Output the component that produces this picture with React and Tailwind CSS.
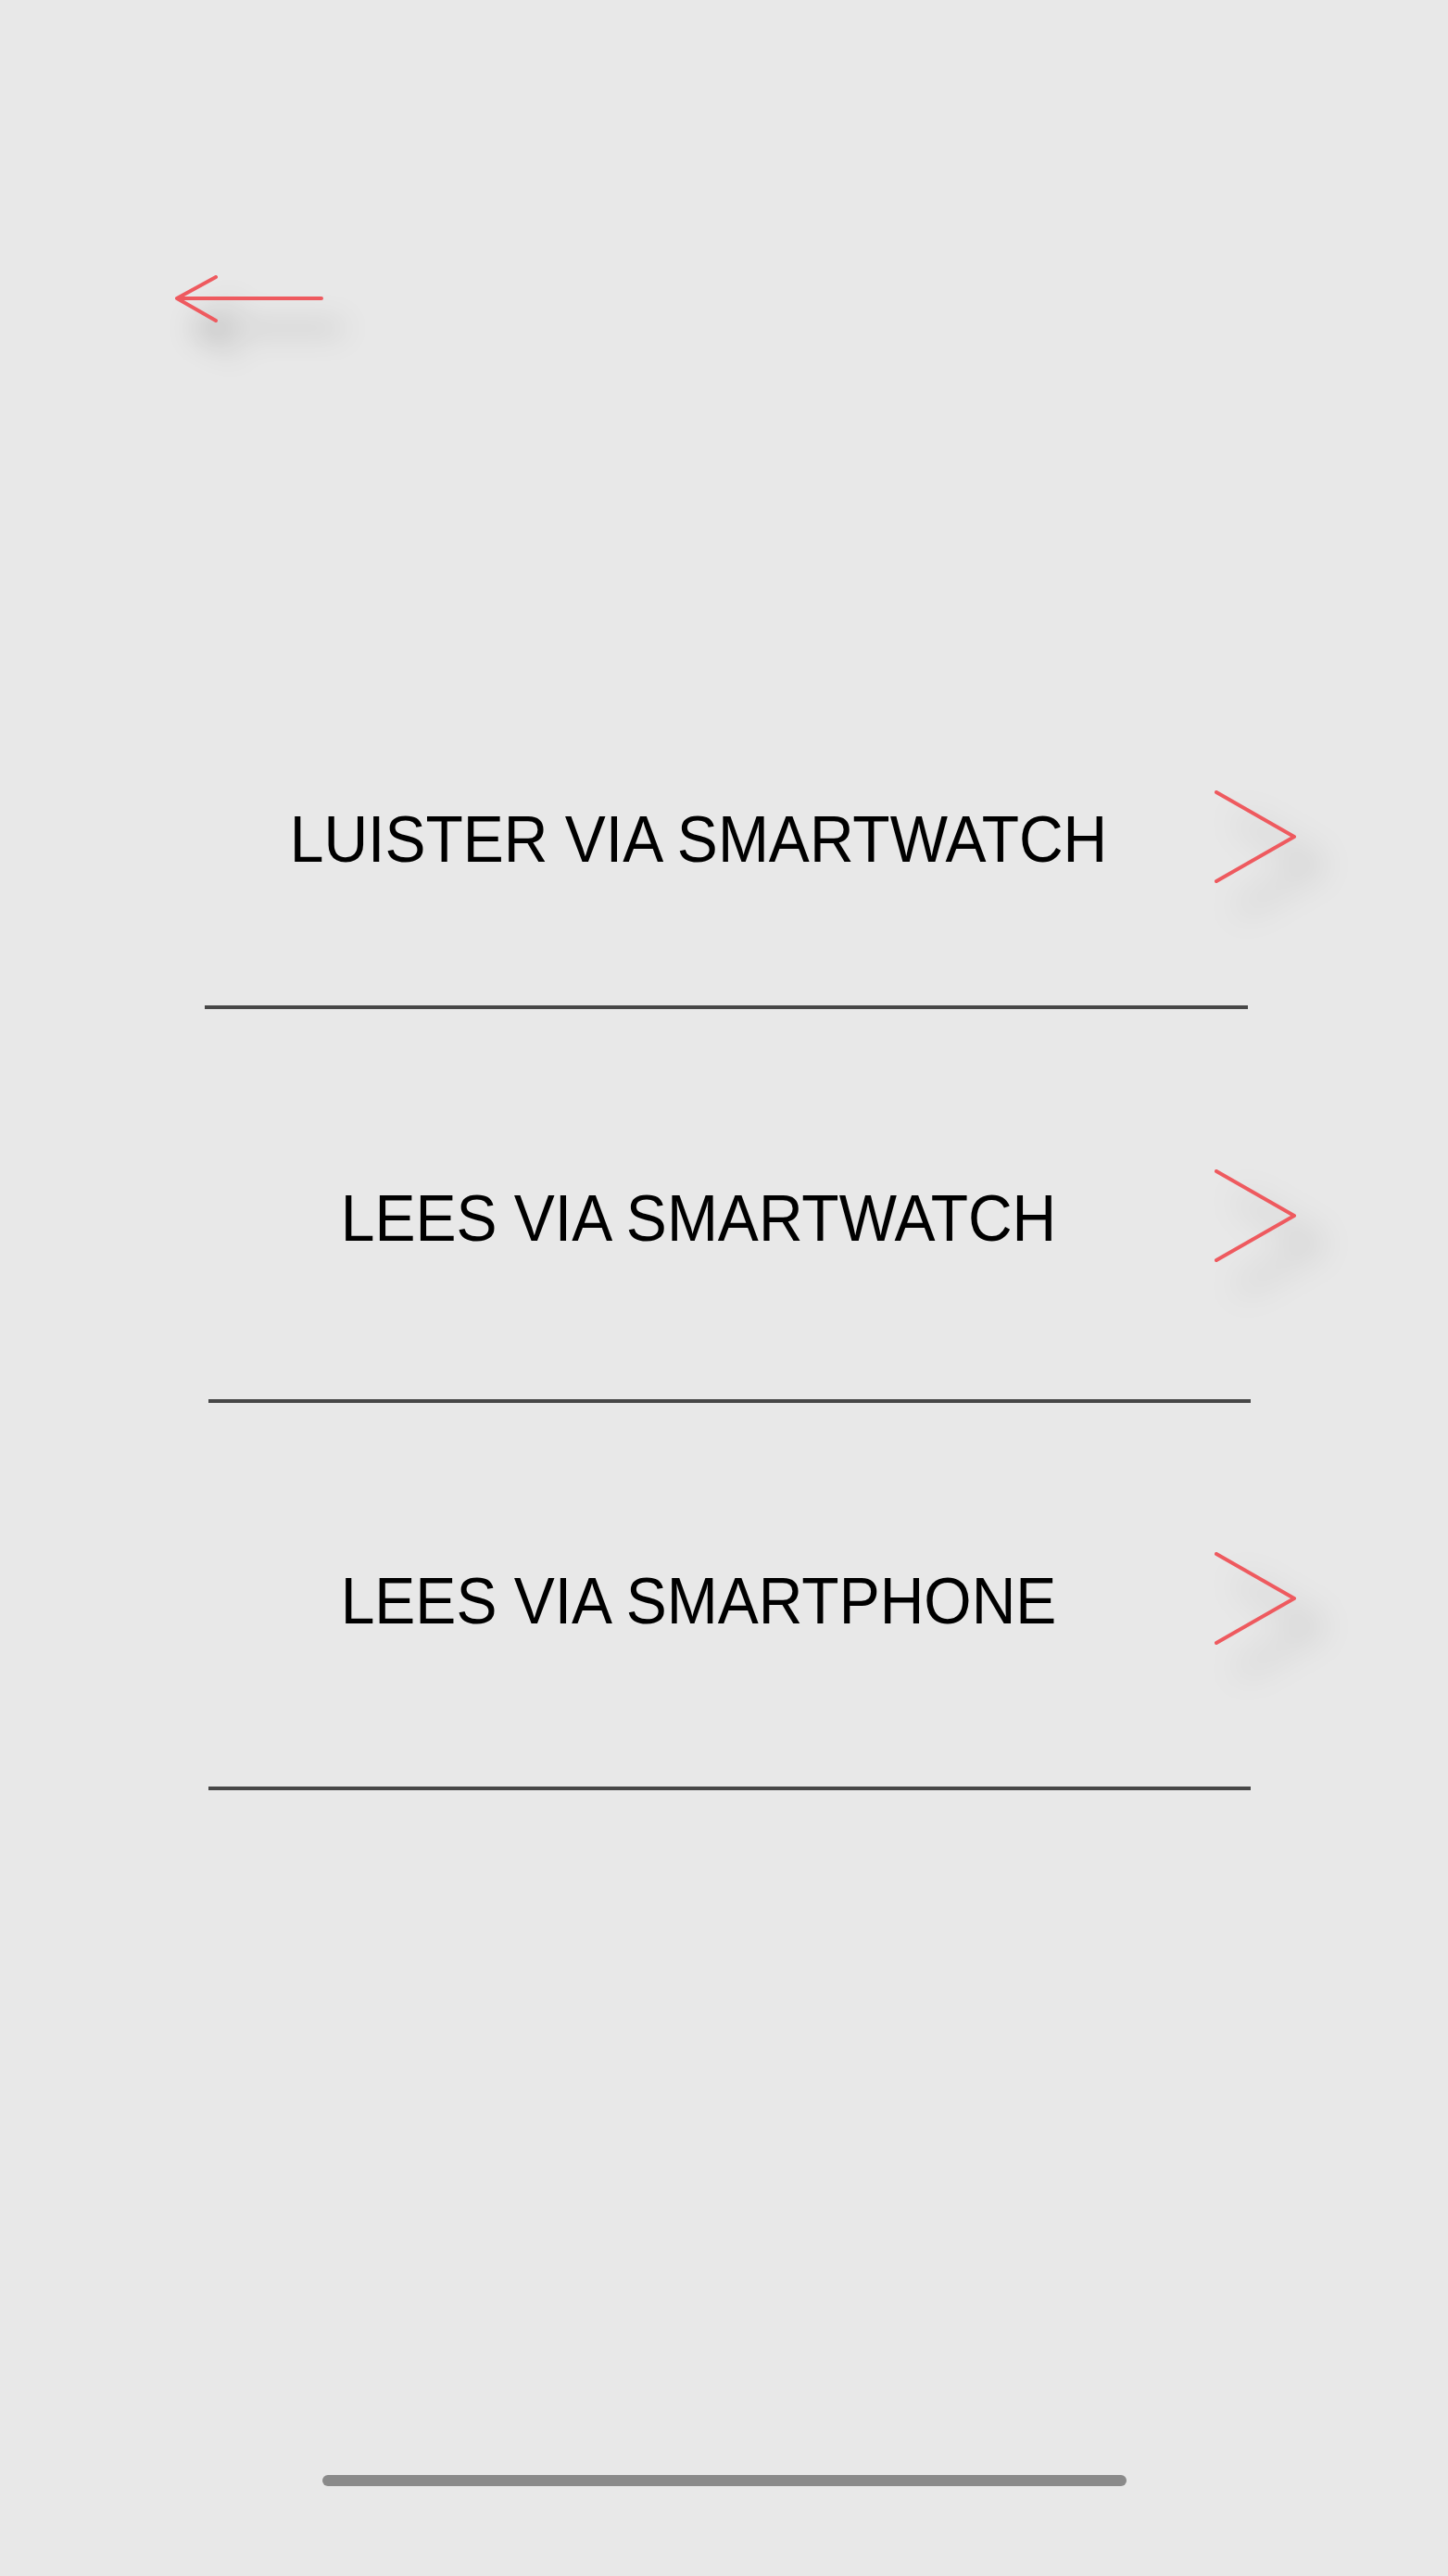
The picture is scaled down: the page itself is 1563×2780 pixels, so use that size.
import React from "react";

const options = [
  {
    label: "LUISTER VIA SMARTWATCH",
    rowClass: "mt-[454px]",
    lineClass: "mt-[79px] ml-[221px] w-[1126px]",
  },
  {
    label: "LEES VIA SMARTWATCH",
    rowClass: "mt-[126px]",
    lineClass: "mt-[95px] ml-[225px] w-[1125px]",
  },
  {
    label: "LEES VIA SMARTPHONE",
    rowClass: "mt-[114px]",
    lineClass: "mt-[100px] ml-[225px] w-[1125px]",
  },
];

const Chevron = () => (
  <svg
    viewBox="0 0 96 108"
    className="ml-[22px] h-[108px] w-[96px] -translate-y-[3px] overflow-visible drop-shadow-[26px_30px_18px_rgba(0,0,0,0.32)]"
    fill="none"
  >
    <polyline
      points="6,6 90,54 6,102"
      stroke="#ee5a5f"
      strokeWidth="4"
      strokeLinecap="round"
      strokeLinejoin="round"
    />
  </svg>
);

const App = () => {
  return (
    <div className="flex min-h-[2780px] w-full flex-col bg-[#e8e8e8] font-['Liberation_Sans',Arial,sans-serif]">
      {/* Back */}
      <div className="pl-[185px] pt-[292px]">
        <svg
          viewBox="0 0 170 60"
          className="h-[60px] w-[170px] overflow-visible drop-shadow-[22px_32px_16px_rgba(0,0,0,0.38)]"
          fill="none"
        >
          <path
            d="M162 30H6M48 7L6 30L48 54"
            stroke="#ee5a5f"
            strokeWidth="4"
            strokeLinecap="round"
            strokeLinejoin="round"
          />
        </svg>
      </div>

      {/* Options */}
      {options.map((opt) => (
        <div key={opt.label}>
          <div className={`flex h-[200px] items-center pl-[223px] ${opt.rowClass}`}>
            <span className="block w-[1062px] scale-y-[1.06] text-center text-[66px] leading-none text-black">
              {opt.label}
            </span>
            <Chevron />
          </div>
          <div className={`h-[4px] bg-[#474747] ${opt.lineClass}`} />
        </div>
      ))}

      {/* Home indicator */}
      <div className="mx-auto mb-[97px] mt-auto h-[12px] w-[868px] rounded-full bg-[#8a8a8a]" />
    </div>
  );
};

export default App;
